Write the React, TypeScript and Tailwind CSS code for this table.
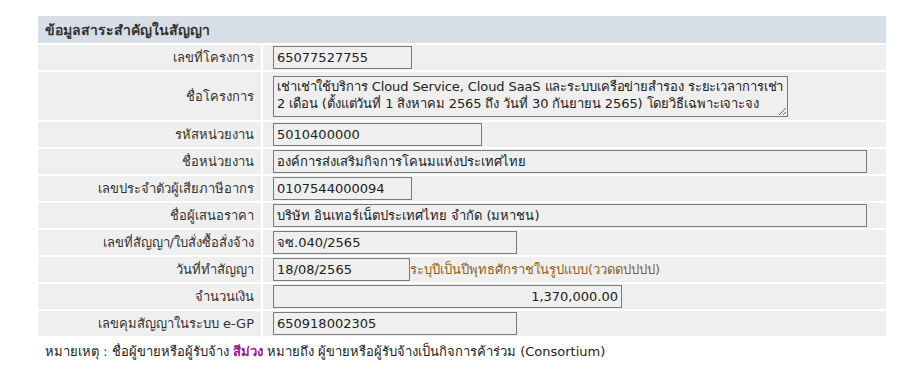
import React from 'react';

// แถวข้อมูลหนึ่งแถว: ป้ายทางซ้าย ค่าทางขวา
const Row = ({ label, children, tall }: { label: string; children: React.ReactNode; tall?: boolean }) => {
  return (
    <div className={`flex bg-[#efefef] ${tall ? 'h-[48px]' : 'h-[25px]'}`}>
      <div className="w-[225px] flex items-center justify-end pr-[7px] border-r-2 border-white text-[#333333]">
        {label}
      </div>
      <div className="flex-1 flex items-center pl-[10px]">{children}</div>
    </div>
  );
};

const Field = ({ value, w, right }: { value: string; w: string; right?: boolean }) => {
  return (
    <input
      readOnly
      value={value}
      className={`${w} h-[23px] border border-[#7a7a7a] bg-transparent px-[3px] text-[#222222] outline-none ${right ? 'text-right' : ''}`}
    />
  );
};

export default function App() {
  const projectName =
    'เช่าเช่าใช้บริการ Cloud Service, Cloud SaaS และระบบเครือข่ายสำรอง ระยะเวลาการเช่า\n2 เดือน (ตั้งแต่วันที่ 1 สิงหาคม 2565 ถึง วันที่ 30 กันยายน 2565) โดยวิธีเฉพาะเจาะจง';

  return (
    <div className="w-[913px] h-[369px] bg-white pt-4 pl-[38px] text-[13px] font-['Tahoma','DejaVu_Sans',sans-serif] leading-none">
      <div className="w-[848px] flex flex-col gap-[2px]">
        {/* หัวตาราง */}
        <div className="h-[27px] bg-[#d8dee6] flex items-center pl-[7px] text-[14px] font-bold text-[#333333]">
          ข้อมูลสาระสำคัญในสัญญา
        </div>
        <Row label="เลขที่โครงการ">
          <Field value="65077527755" w="w-[139px]" />
        </Row>
        <Row label="ชื่อโครงการ" tall>
          <textarea
            readOnly
            wrap="off"
            value={projectName}
            className="w-[515px] h-[41px] border border-[#7a7a7a] bg-transparent px-[3px] py-[1px] leading-[17px] tracking-[-0.1px] text-[#222222] overflow-hidden outline-none"
          />
        </Row>
        <Row label="รหัสหน่วยงาน">
          <Field value="5010400000" w="w-[209px]" />
        </Row>
        <Row label="ชื่อหน่วยงาน">
          <Field value="องค์การส่งเสริมกิจการโคนมแห่งประเทศไทย" w="w-[594px]" />
        </Row>
        <Row label="เลขประจำตัวผู้เสียภาษีอากร">
          <Field value="0107544000094" w="w-[139px]" />
        </Row>
        <Row label="ชื่อผู้เสนอราคา">
          <Field value="บริษัท อินเทอร์เน็ตประเทศไทย จำกัด (มหาชน)" w="w-[594px]" />
        </Row>
        <Row label="เลขที่สัญญา/ใบสั่งซื้อสั่งจ้าง">
          <Field value="จซ.040/2565" w="w-[244px]" />
        </Row>
        <Row label="วันที่ทำสัญญา">
          <Field value="18/08/2565" w="w-[137px]" />
          <span className="text-[#8d6418]">ระบุปีเป็นปีพุทธศักราชในรูปแบบ(ววดดปปปป)</span>
        </Row>
        <Row label="จำนวนเงิน">
          <Field value="1,370,000.00" w="w-[349px]" right />
        </Row>
        <Row label="เลขคุมสัญญาในระบบ e-GP">
          <Field value="650918002305" w="w-[244px]" />
        </Row>
      </div>
      <p className="mt-[9px] pl-[7px] text-[#222222]">
        หมายเหตุ : ชื่อผู้ขายหรือผู้รับจ้าง <span className="font-bold text-[#a0138e]">สีม่วง</span> หมายถึง
        ผู้ขายหรือผู้รับจ้างเป็นกิจการค้าร่วม (Consortium)
      </p>
    </div>
  );
}
